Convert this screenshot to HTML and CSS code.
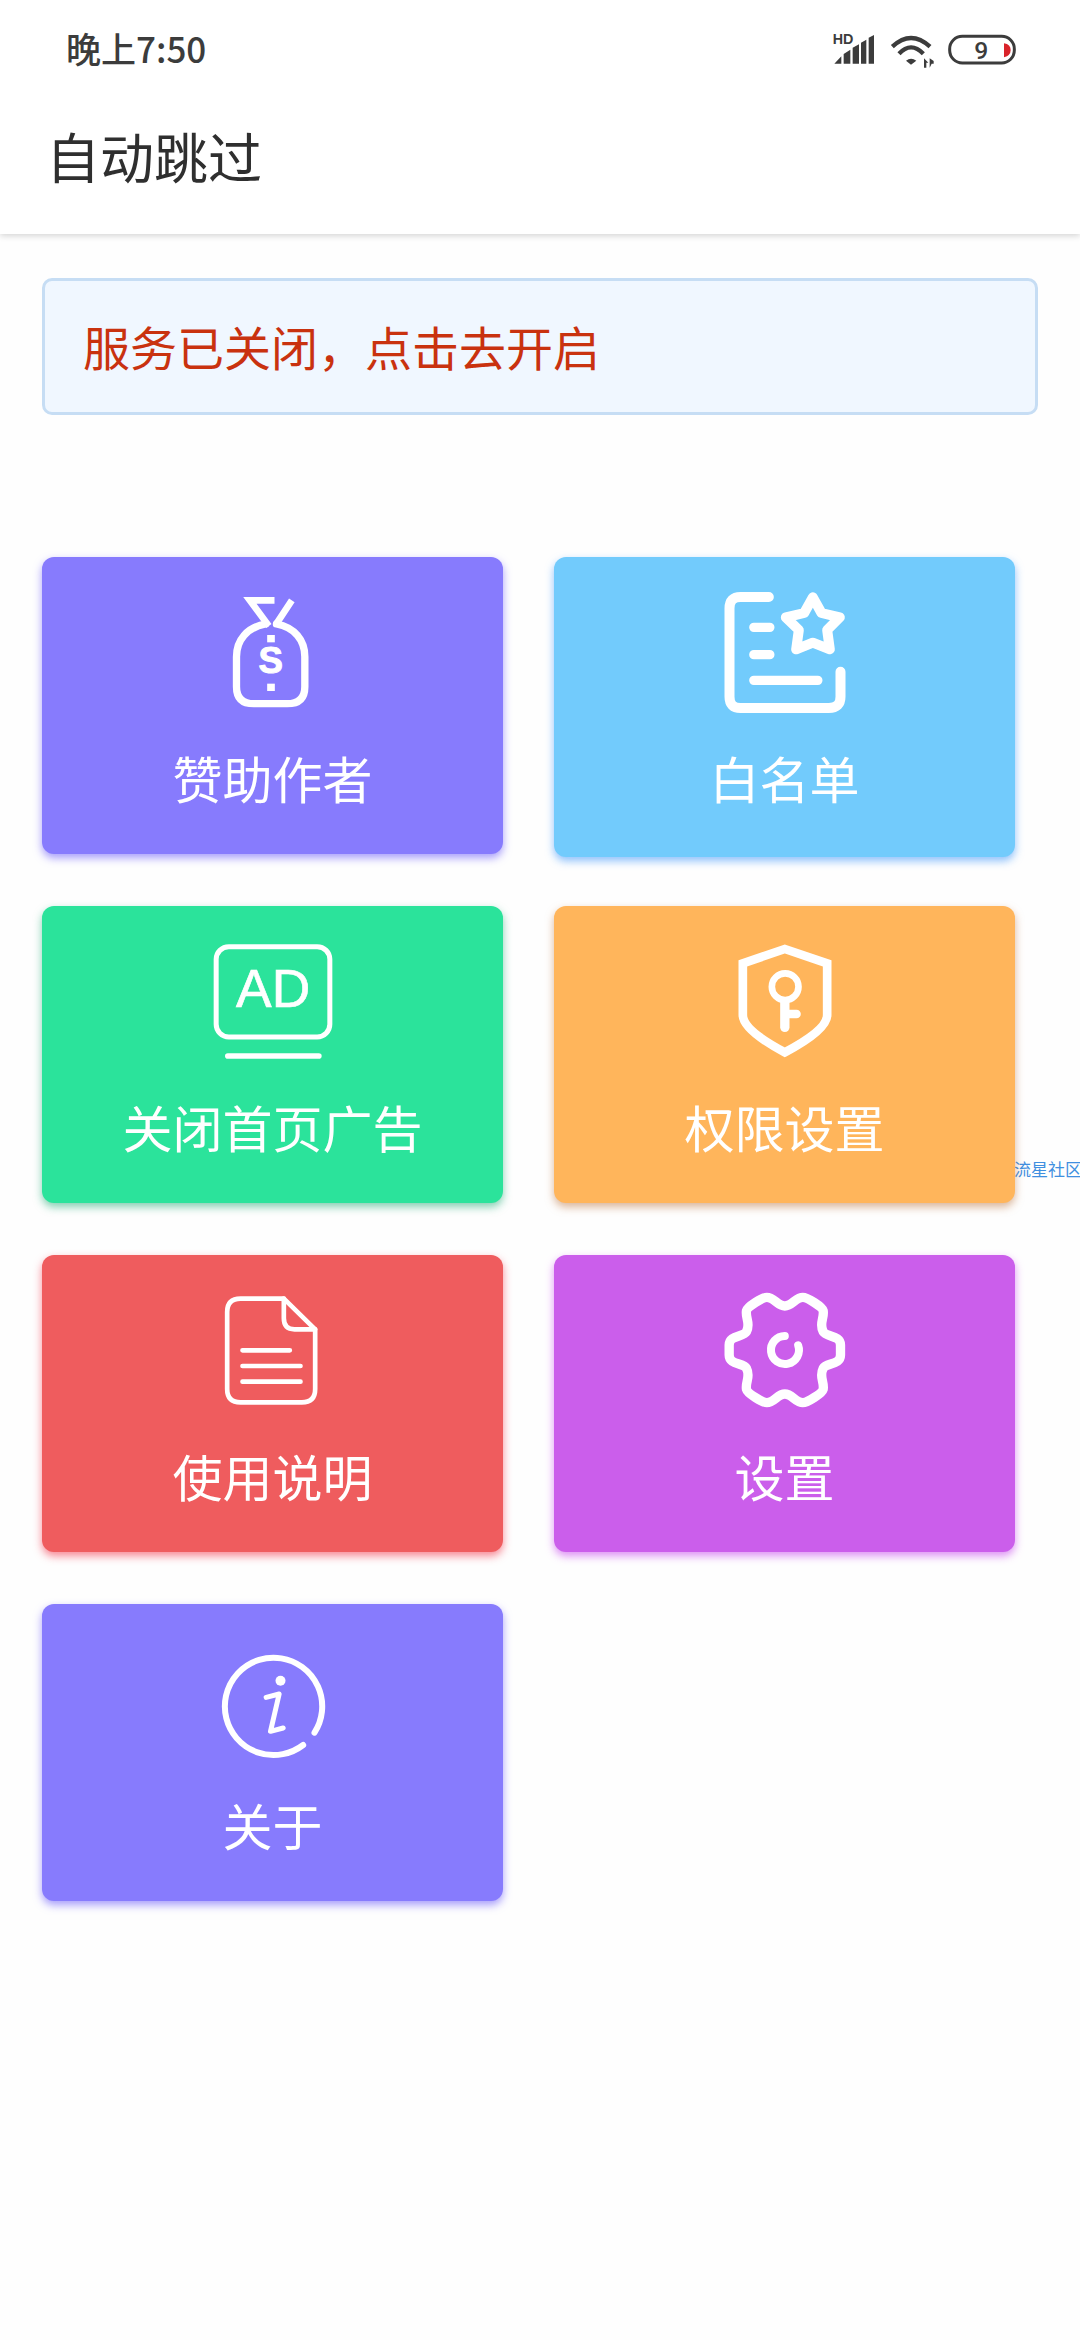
FILE: index.html
```html
<!DOCTYPE html>
<html lang="zh-CN">
<head>
<meta charset="utf-8">
<title>自动跳过</title>
<link rel="stylesheet" href="styles.css">
</head>
<body>
<header class="appbar">
  <div class="statusbar">
    <span class="time">晚上7:50</span>
    <svg class="status-icons" viewBox="0 0 780 210" width="260" height="70">
      <text class="hd" x="98" y="100">HD</text>
      <path class="fill-dark" d="M103 158 L124 136 V158 Z M131 129 L151 116 V158 H131 Z M158 110 L177 100 V158 H158 Z M183 95 L199 86 V158 H183 Z M206 80 L222 72 V158 H206 Z"/>
      <path class="wifi" d="M277 107 Q333 55 390 107 M297 128 Q333 90 370 128"/>
      <path class="fill-dark" d="M318 149 Q333 137 349 149 L333 161 Z M372 142 V170 H379 V155 H385 Z M389 142 V170 L395 158 H401 V150 Z"/>
      <rect class="batt" x="449" y="76" width="194" height="80" rx="38"/>
      <text class="batt-num" x="544" y="144">9</text>
      <path class="fill-red" d="M612 97 Q632 100 632 117 Q632 134 612 139 Z"/>
    </svg>
  </div>
  <div class="toolbar"><h1 class="title">自动跳过</h1></div>
</header>

<main class="content">
  <div class="alert">服务已关闭，点击去开启</div>

  <div class="grid">
    <div class="card c-purple">
      <svg class="icon" viewBox="517.5 135 480 450">
        <path class="s22" d="M735 252 C680 262 648 300 648 350 L648 440 Q648 491 700 491 L800 491 Q853 491 853 440 L853 350 C853 300 822 262 768 252"/>
        <path class="s20 miter" d="M762 181 L688 181 L745 258 M814 181 L766 254"/>
        <rect class="fill-w" x="740" y="285" width="23" height="22"/>
        <rect class="fill-w" x="740" y="431" width="23" height="22"/>
        <text class="dollar" x="751" y="399">S</text>
      </svg>
      <div class="label">赞助作者</div>
    </div>

    <div class="card c-blue">
      <svg class="icon" viewBox="493.5 135 480 450">
        <path class="s30" d="M685 171 L600 171 Q567 171 567 205 L567 470 Q567 504 600 504 L865 504 Q900 504 900 470 L900 395"/>
        <path class="s28" d="M640 262 L688 262 M640 344 L688 344 M640 421 L832 421"/>
        <path class="s30" d="M817 172 L843 219 L898 232 L860 270 L868 328 L817 308 L767 328 L775 270 L736 232 L791 219 Z"/>
      </svg>
      <div class="label">白名单</div>
    </div>

    <div class="card c-green">
      <svg class="icon" viewBox="517.5 132 480 450">
        <rect class="s15" x="587" y="170" width="341" height="271" rx="38"/>
        <text class="ad" x="758" y="350">AD</text>
        <path class="s17" d="M622 498 L895 498"/>
      </svg>
      <div class="label">关闭首页广告</div>
    </div>

    <div class="card c-orange">
      <svg class="icon" viewBox="493.5 132 480 450">
        <path class="s26 miter" d="M733 177 L860 220 L860 375 Q860 420 733 487 Q607 420 607 375 L607 220 Z"/>
        <circle class="s20" cx="734" cy="290" r="40"/>
        <path class="s28" d="M733 335 L733 412"/>
        <path class="s26" d="M745 372 L768 372"/>
      </svg>
      <div class="label">权限设置</div>
    </div>

    <div class="card c-red">
      <svg class="icon" viewBox="517.5 129 480 450">
        <path class="s14" d="M790 176 L660 176 Q620 176 620 216 L620 447 Q620 487 660 487 L844 487 Q884 487 884 447 L884 268 Z"/>
        <path class="s14" d="M790 176 L790 235 Q790 268 822 268 L884 268"/>
        <path class="s14" d="M666 331 L808 331 M666 378 L840 378 M666 425 L840 425"/>
      </svg>
      <div class="label">使用说明</div>
    </div>

    <div class="card c-violet">
      <svg class="icon" viewBox="493.5 129 480 450">
        <path class="s28" d="M733 198 C755 198 765 172 787 172 C800 172 845 200 848 212 C852 235 835 250 848 275 C858 292 900 285 900 315 L900 345 C900 375 858 368 848 385 C835 410 852 425 848 448 C845 460 800 488 787 488 C765 488 755 462 733 462 C711 462 701 488 679 488 C666 488 621 460 618 448 C614 425 631 410 618 385 C608 368 566 375 566 345 L566 315 C566 285 608 292 618 275 C631 250 614 235 618 212 C621 200 666 172 679 172 C701 172 711 198 733 198 Z"/>
        <path class="s24" d="M733 288 A42 42 0 1 0 773 316"/>
      </svg>
      <div class="label">设置</div>
    </div>

    <div class="card c-purple">
      <svg class="icon" viewBox="517.5 126 480 450">
        <path class="s18" d="M882 428 A146 146 0 1 0 848 465"/>
        <circle class="fill-w" cx="780" cy="272" r="15"/>
        <path class="s15" d="M737 322 L776 312 L750 424 L788 414"/>
      </svg>
      <div class="label">关于</div>
    </div>
  </div>
</main>

<div class="watermark">流星社区</div>
</body>
</html>
```

FILE: styles.css
```css
html, body {
  margin: 0;
  padding: 0;
}
body {
  position: relative;
  width: 1080px;
  height: 2340px;
  overflow: hidden;
  background: #fefefe;
  font-family: "Noto Sans CJK SC", "Noto Sans", sans-serif;
}
.appbar {
  background: #fff;
  box-shadow: 0 2px 6px rgba(0, 0, 0, 0.16);
  position: relative;
}
.statusbar {
  height: 100px;
  display: flex;
  align-items: center;
  justify-content: space-between;
  padding: 0 20px 5px 66px;
  box-sizing: border-box;
}
.time {
  font-size: 35px;
  font-weight: 500;
  color: #3c3c3c;
  font-family: "Noto Sans CJK SC", "Roboto", sans-serif;
}
.status-icons {
  display: block;
  margin-top: -3px;
}
.hd {
  font: 700 43px "Liberation Sans", sans-serif;
  fill: #3c3c3c;
}
.fill-dark { fill: #3c3c3c; }
.fill-red { fill: #d9232a; }
.fill-w { fill: #fff; }
.wifi {
  fill: none;
  stroke: #3c3c3c;
  stroke-width: 13;
}
.batt {
  fill: none;
  stroke: #3c3c3c;
  stroke-width: 9;
}
.batt-num {
  font: 500 74px "Roboto", sans-serif;
  fill: #3c3c3c;
  text-anchor: middle;
}
.toolbar {
  height: 134px;
  padding: 0 0 24px 46px;
  box-sizing: border-box;
  display: flex;
  align-items: center;
}
.title {
  margin: 0;
  font-size: 54px;
  font-weight: 400;
  color: #2f2f2f;
}
.content {
  padding: 44px 42px 0 42px;
}
.alert {
  height: 137px;
  box-sizing: border-box;
  display: flex;
  align-items: center;
  padding: 0 0 3px 38px;
  background: #f0f7ff;
  border: 3px solid #c6ddf4;
  border-radius: 10px;
  font-size: 47px;
  color: #c9320f;
}
.grid {
  margin-top: 142px;
  display: grid;
  grid-template-columns: 461px 461px;
  column-gap: 51px;
  row-gap: 52px;
}
.card {
  height: 297px;
  border-radius: 12px;
  position: relative;
  z-index: 1;
  box-sizing: border-box;
  padding-top: 28px;
  display: flex;
  flex-direction: column;
  align-items: center;
}
.icon {
  width: 160px;
  height: 150px;
  display: block;
  flex: none;
}
.label {
  font-size: 50px;
  line-height: 85px;
  color: #fff;
}
.c-purple { background: #877bfd; box-shadow: 0 4px 9px rgba(120, 105, 250, 0.65); }
.c-blue { background: #72cbfc; box-shadow: 0 4px 9px rgba(80, 160, 250, 0.65); height: 300px; margin-bottom: -3px; }
.c-green { background: #2be39b; box-shadow: 0 4px 9px rgba(30, 170, 115, 0.55); }
.c-orange { background: #ffb55b; box-shadow: 0 4px 9px rgba(190, 120, 70, 0.55); }
.c-red { background: #ef5c5e; box-shadow: 0 4px 9px rgba(245, 70, 90, 0.65); }
.c-violet { background: #cb5eeb; box-shadow: 0 4px 9px rgba(205, 85, 240, 0.65); }

.s14, .s15, .s17, .s18, .s20, .s22, .s24, .s26, .s28, .s30 {
  fill: none;
  stroke: #fff;
  stroke-linecap: round;
  stroke-linejoin: round;
}
.s14 { stroke-width: 14; }
.s15 { stroke-width: 15; }
.s17 { stroke-width: 17; }
.s18 { stroke-width: 18; }
.s20 { stroke-width: 20; }
.s22 { stroke-width: 22; }
.s24 { stroke-width: 24; }
.s26 { stroke-width: 26; }
.s28 { stroke-width: 28; }
.s30 { stroke-width: 30; }
.miter {
  stroke-linecap: butt;
  stroke-linejoin: miter;
}
.dollar {
  font: 700 110px "Liberation Sans", sans-serif;
  fill: #fff;
  stroke: #fff;
  stroke-width: 3;
  text-anchor: middle;
}
.ad {
  font: 400 160px "Liberation Sans", sans-serif;
  fill: #fff;
  stroke: #fff;
  stroke-width: 2;
  text-anchor: middle;
}
.watermark {
  position: absolute;
  left: 1014px;
  top: 1159px;
  font-size: 17px;
  line-height: 20px;
  white-space: nowrap;
  color: #3f8fe0;
}
```
